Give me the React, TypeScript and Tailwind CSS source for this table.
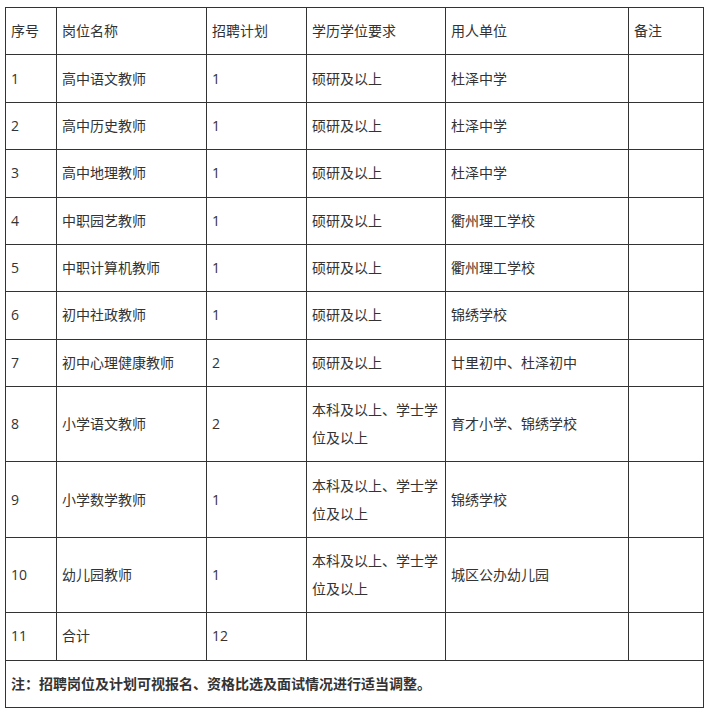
const rows: [string, string, string, string, string][] = [
  ["1", "高中语文教师", "1", "硕研及以上", "杜泽中学"],
  ["2", "高中历史教师", "1", "硕研及以上", "杜泽中学"],
  ["3", "高中地理教师", "1", "硕研及以上", "杜泽中学"],
  ["4", "中职园艺教师", "1", "硕研及以上", "衢州理工学校"],
  ["5", "中职计算机教师", "1", "硕研及以上", "衢州理工学校"],
  ["6", "初中社政教师", "1", "硕研及以上", "锦绣学校"],
  ["7", "初中心理健康教师", "2", "硕研及以上", "廿里初中、杜泽初中"],
  ["8", "小学语文教师", "2", "本科及以上、学士学|位及以上", "育才小学、锦绣学校"],
  ["9", "小学数学教师", "1", "本科及以上、学士学|位及以上", "锦绣学校"],
  ["10", "幼儿园教师", "1", "本科及以上、学士学|位及以上", "城区公办幼儿园"],
  ["11", "合计", "12", "", ""],
];

const headers = ["序号", "岗位名称", "招聘计划", "学历学位要求", "用人单位", "备注"];

const cell = "border border-[#333] px-[5px] py-[9.2px] align-middle text-left leading-[28px]";

export default function App() {
  return (
    <div
      className="min-h-[715px] bg-white pl-[5px] pt-[7px] text-[14px] text-[#333]"
      style={{ fontFamily: '"Segoe UI", "Open Sans", "Noto Sans CJK SC", sans-serif' }}
    >
      <table className="w-[698px] table-fixed border-collapse">
        <colgroup>
          <col className="w-[51px]" />
          <col className="w-[150px]" />
          <col className="w-[100px]" />
          <col className="w-[139px]" />
          <col className="w-[183px]" />
          <col className="w-[75px]" />
        </colgroup>
        <thead>
          <tr>
            {headers.map((h) => (
              <th key={h} className={`${cell} font-normal`}>
                {h}
              </th>
            ))}
          </tr>
        </thead>
        <tbody>
          {rows.map((r) => (
            <tr key={r[0]}>
              {r.map((v, i) => (
                <td key={i} className={cell}>
                  {v.split("|").map((line, j) => (
                    <div key={j}>{line}</div>
                  ))}
                </td>
              ))}
              <td className={cell}></td>
            </tr>
          ))}
          <tr>
            <td colSpan={6} className={`${cell} font-bold`}>
              注：招聘岗位及计划可视报名、资格比选及面试情况进行适当调整。
            </td>
          </tr>
        </tbody>
      </table>
    </div>
  );
}
